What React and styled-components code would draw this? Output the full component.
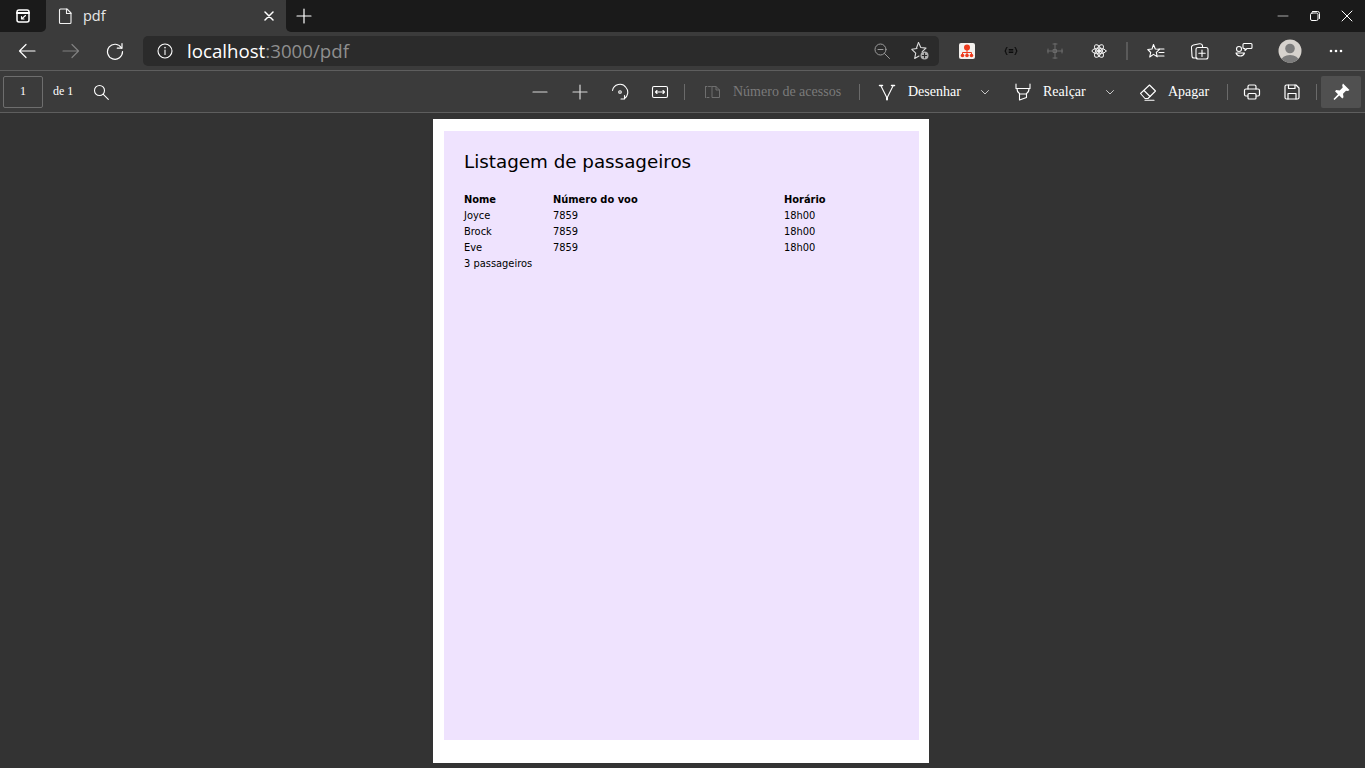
import React from "react";
import styled, { createGlobalStyle } from "styled-components";

const Global = createGlobalStyle`
  html, body { margin: 0; padding: 0; height: 768px; overflow: hidden; background: #333; }
  #root { height: 768px; }
`;
const Shell = styled.div`display:flex;flex-direction:column;width:1365px;height:768px;background:#333;overflow:hidden;`;
const TabStrip = styled.div`display:flex;height:32px;background:#3b3b3b;`;
const StripLeft = styled.div`display:flex;align-items:center;justify-content:center;width:46px;background:#1a1a1a;border-bottom-right-radius:5px;`;
const Tab = styled.div`display:flex;align-items:center;width:240px;background:#3b3b3b;border-radius:6px 6px 0 0;color:#e8e8e8;font:14.5px "Open Sans",sans-serif;padding-left:10px;box-sizing:border-box;`;
const TabTitle = styled.span`margin-left:9px;flex:1;padding-bottom:2px;`;
const TabClose = styled.span`display:flex;width:34px;justify-content:center;`;
const StripRest = styled.div`flex:1;display:flex;align-items:center;background:#1a1a1a;border-bottom-left-radius:5px;`;
const NewTab = styled.span`display:flex;width:36px;justify-content:center;`;
const WinControls = styled.div`display:flex;margin-left:auto;padding-right:2px;`;
const WinBtn = styled.span`display:flex;width:32px;justify-content:center;`;
const AddressRow = styled.div`display:flex;align-items:center;height:38px;padding-left:5px;background:#3b3b3b;border-bottom:1px solid #5e5e5e;`;
const Slot = styled.span`display:flex;flex:none;align-items:center;justify-content:center;width:${p => p.$w || 44}px;height:30px;margin-left:${p => p.$ml || 0}px;opacity:${p => p.$dim ? 0.35 : 1};`;
const Omnibox = styled.div`display:flex;align-items:center;width:796px;height:30px;margin-left:6px;margin-right:6px;background:#2b2b2b;border-radius:5px;`;
const Url = styled.div`flex:1;font:18.7px "Open Sans",sans-serif;color:#fff;padding-bottom:2px;`;
const UrlMuted = styled.span`color:#8f8f8f;`;
const VBar = styled.span`flex:none;width:2px;height:18px;background:#5a5a5a;margin-left:5px;margin-right:6px;`;
const PdfBar = styled.div`display:flex;align-items:center;height:41px;padding:0 4px 0 3px;background:#3b3b3b;border-bottom:1px solid #5e5e5e;font:14px "Liberation Serif",serif;color:#fff;`;
const PageInput = styled.div`display:flex;flex:none;align-items:center;justify-content:center;box-sizing:border-box;width:40px;height:32px;border:1px solid #6e6e6e;border-radius:2px;font-size:12px;`;
const PageOf = styled.span`flex:none;margin-left:10px;font-size:12px;width:30px;white-space:nowrap;`;
const Tool = styled.span`display:flex;flex:none;align-items:center;justify-content:center;width:${p => p.$w || 40}px;height:32px;margin-left:${p => p.$ml || 0}px;`;
const Label = styled.span`flex:none;width:${p => p.$w}px;margin-left:${p => p.$ml || 0}px;color:${p => p.$muted ? "#7a7a7a" : "#fff"};white-space:nowrap;`;
const Divider = styled.span`flex:none;width:1px;height:16px;background:#6a6a6a;margin-left:${p => p.$ml || 0}px;`;
const PinBtn = styled(Tool)`background:#505050;border-radius:2px;`;
const Viewer = styled.main`flex:1;display:flex;justify-content:center;padding-top:6px;padding-right:3px;box-sizing:border-box;`;
const Sheet = styled.div`box-sizing:border-box;width:496px;height:644px;padding:12px 10px 23px 11px;background:#fff;`;
const Content = styled.div`box-sizing:border-box;height:609px;padding:20px;background:#efe3fe;color:#000;font:9.9px "DejaVu Sans",sans-serif;`;
const Title = styled.h1`margin:0 0 19px;font-weight:400;font-size:18.3px;line-height:22px;`;
const Row = styled.div`display:grid;grid-template-columns:89px 231px 1fr;height:16px;line-height:16px;font-weight:${p => p.$head ? 700 : 400};`;

const Ic = ({ s = 18, w = 1.3, c = "#fff", children, vb = 18 }) => (
  <svg width={s} height={s} viewBox={`0 0 ${vb} ${vb}`} fill="none" stroke={c} strokeWidth={w} strokeLinecap="round" strokeLinejoin="round">{children}</svg>
);
const rows = [["Joyce", "7859", "18h00"], ["Brock", "7859", "18h00"], ["Eve", "7859", "18h00"]];

export default function App() {
  return (
    <Shell>
      <Global />
      <TabStrip>
        <StripLeft>
          <Ic s={16} vb={16} w={1.5}>
            <rect x="2" y="2" width="12" height="12" rx="2" />
            <path d="M2 5h12" strokeWidth="2" />
            <path d="M10.5 7.5 6.5 11M6.5 8.5V11H9" strokeWidth="1.1" />
          </Ic>
        </StripLeft>
        <Tab>
          <Ic s={18} w={1.1} c="#f2f2f2">
            <path d="M4.500 2h6.500l4 4v9.500a1 1 0 0 1-1 1H4.500a1 1 0 0 1-1-1V3a1 1 0 0 1 1-1z" />
            <path d="M10.500 2v4.500H15" />
          </Ic>
          <TabTitle>pdf</TabTitle>
          <TabClose>
            <Ic s={10} vb={10} w={1.5}><path d="M1 1l8 8M9 1l-8 8" /></Ic>
          </TabClose>
        </Tab>
        <StripRest>
          <NewTab>
            <Ic s={16} vb={16} w={1.2}><path d="M8 1v14M1 8h14" /></Ic>
          </NewTab>
          <WinControls>
            <WinBtn><Ic s={12} vb={12} c="#a8a8a8" w={1}><path d="M1 6h10" /></Ic></WinBtn>
            <WinBtn><Ic s={12} vb={12} w={1}><rect x="1.500" y="3" width="7.500" height="7.500" rx="1.500" /><path d="M3.500 1.500h5a2 2 0 0 1 2 2v5" /></Ic></WinBtn>
            <WinBtn><Ic s={12} vb={12} w={1}><path d="M1 1l10 10M11 1 1 11" /></Ic></WinBtn>
          </WinControls>
        </StripRest>
      </TabStrip>

      <AddressRow>
        <Slot><Ic s={18} w={1.2}><path d="M17 9H1.500M8 2.500 1.500 9 8 15.500" /></Ic></Slot>
        <Slot $dim><Ic s={18} w={1.2}><path d="M1 9h15.500M10 2.500 16.500 9 10 15.500" /></Ic></Slot>
        <Slot><Ic s={18} w={1.2}><path d="M15.500 6A7.500 7.500 0 1 0 16.500 9.500" /><path d="M16 1.500V6.200h-4.700" /></Ic></Slot>
        <Omnibox>
          <Slot><Ic s={16} vb={16} w={1.1}><circle cx="8" cy="8" r="7" /><path d="M8 7v4.500" /><path d="M8 4.500v.3" strokeWidth="1.500" /></Ic></Slot>
          <Url>localhost<UrlMuted>:3000/pdf</UrlMuted></Url>
          <Slot $w={38}><Ic s={16} vb={16} w={1} c="#9a9a9a"><circle cx="6.500" cy="6.500" r="5.500" /><path d="M4 6.500h5M10.500 10.500l5 5" /></Ic></Slot>
          <Slot $w={38}>
            <Ic s={20} vb={20} w={1.1} c="#dcdcdc">
              <path d="M8.500 1.500l2.300 5 5.200.6-3.800 3.600" /><path d="M9 15l-4.300 2.500 1-5.400L1.800 8.300 7 7.500" />
              <path d="M8.500 1.500 6.500 7" />
              <circle cx="14.500" cy="14.500" r="4" fill="#b0b0b0" stroke="none" />
              <path d="M14.500 12.300v4.400M12.300 14.500h4.400" stroke="#2b2b2b" />
            </Ic>
          </Slot>
        </Omnibox>
        <Slot>
          <svg width="16" height="16" viewBox="0 0 16 16">
            <rect width="16" height="16" rx="2" fill="#f4f1ee" />
            <circle cx="8" cy="4.500" r="3" fill="#ee3a1c" />
            <path d="M8 7v3M3.500 11V9.500h9V11M8 9.500V11" stroke="#ee3a1c" fill="none" />
            <circle cx="3.500" cy="12.500" r="1.800" fill="#ee3a1c" /><circle cx="8" cy="12.500" r="1.800" fill="#ee3a1c" /><circle cx="12.500" cy="12.500" r="1.800" fill="#ee3a1c" />
          </svg>
        </Slot>
        <Slot>
          <Ic s={14} vb={14} c="#0c0c0c" w={1.2}>
            <path d="M3 3.500C1.800 3.500 2.200 6.700 1 7c1.200.3.800 3.500 2 3.500M11 3.500c1.200 0 .8 3.200 2 3.500-1.200.3-.8 3.500-2 3.500" />
            <path d="M5.200 5.500h3.600M5.200 7h3.600M5.200 8.500h3.600" />
          </Ic>
        </Slot>
        <Slot>
          <Ic s={16} vb={16} c="#6c6c6c" w={1}>
            <path d="M8 0.500v15M0.500 8h15M6 1h4M6 15h4M1 6v4M15 6v4" />
            <rect x="6.500" y="6.500" width="3" height="3" />
          </Ic>
        </Slot>
        <Slot>
          <Ic s={16} vb={16} w={1} c="#f2f2f2">
            <circle cx="8" cy="8" r="1.500" fill="#f2f2f2" />
            <ellipse cx="8" cy="8" rx="7" ry="2.800" />
            <ellipse cx="8" cy="8" rx="7" ry="2.800" transform="rotate(60 8 8)" />
            <ellipse cx="8" cy="8" rx="7" ry="2.800" transform="rotate(120 8 8)" />
          </Ic>
        </Slot>
        <VBar />
        <Slot>
          <Ic s={18} w={1.1}>
            <path d="M6.500 1.500 8.300 6l4.200.3-3.200 3 1 4.500-3.800-2.400L2.700 14l1-4.500L.8 6.500 5 6z" transform="translate(0 1)" />
            <path d="M12 7h5M12 10.500h5M11 14h6" />
          </Ic>
        </Slot>
        <Slot>
          <Ic s={18} w={1.1}>
            <path d="M6 16H3a2 2 0 0 1-2-2l-.5-8a2.500 2.500 0 0 1 2-3l6-1.200a2.500 2.500 0 0 1 3 2V5" />
            <rect x="5" y="5.500" width="12" height="11.500" rx="2" />
            <path d="M11 8v6.500M7.800 11.200h6.400" />
          </Ic>
        </Slot>
        <Slot>
          <Ic s={18} w={1.1}>
            <circle cx="4" cy="7" r="2.500" />
            <path d="M1 11h8.500a4.500 4.500 0 0 1-8.500 0z" />
            <path d="M8 2.500a1 1 0 0 1 1-1h7a1 1 0 0 1 1 1v3a1 1 0 0 1-1 1h-4l-2 2v-2H9a1 1 0 0 1-1-1z" />
          </Ic>
        </Slot>
        <Slot $ml={2}>
          <svg width="24" height="24" viewBox="0 0 24 24">
            <defs><clipPath id="av"><circle cx="12" cy="12" r="11.500" /></clipPath></defs>
            <circle cx="12" cy="12" r="11.500" fill="#d6d2cd" />
            <g clipPath="url(#av)" fill="#7c7c7c">
              <circle cx="12" cy="9.500" r="4.800" />
              <ellipse cx="12" cy="22" rx="9" ry="6" />
            </g>
          </svg>
        </Slot>
        <Slot $ml={2}>
          <svg width="14" height="4" viewBox="0 0 14 4" fill="#fff"><circle cx="2" cy="2" r="1.300" /><circle cx="7" cy="2" r="1.300" /><circle cx="12" cy="2" r="1.300" /></svg>
        </Slot>
      </AddressRow>

      <PdfBar>
        <PageInput>1</PageInput>
        <PageOf>de 1</PageOf>
        <Tool $w={36}><Ic s={16} vb={16} w={1.1}><circle cx="6.500" cy="6.500" r="5" /><path d="M10.300 10.300l5 5" /></Ic></Tool>
        <Tool $ml={401}><Ic s={18} w={1.2} c="#d8d8d8"><path d="M2 9h14" /></Ic></Tool>
        <Tool><Ic s={18} w={1.2} c="#d8d8d8"><path d="M2 9h14M9 2v14" /></Ic></Tool>
        <Tool>
          <Ic s={18} w={1.1}>
            <path d="M1.500 7.500A7.500 7.500 0 0 1 15 4.500a7.500 7.500 0 0 1-1.500 11" />
            <circle cx="9" cy="9" r="1.300" />
            <path d="M13.500 12.500v3.500H10" />
          </Ic>
        </Tool>
        <Tool>
          <Ic s={18} w={1.1}>
            <rect x="1.500" y="3.500" width="15" height="11" rx="1.500" />
            <path d="M4.500 9h9M6 7.500 4.500 9 6 10.500M12 7.500 13.500 9 12 10.500" />
          </Ic>
        </Tool>
        <Divider $ml={4} />
        <Tool $ml={7} $w={40}>
          <Ic s={18} w={1} c="#6f6f6f">
            <path d="M7.500 3.500h-5v11h5M2.500 3.500v11" strokeDasharray="2 1.500" />
            <path d="M9 3.500v11h7.500V7L13 3.500H9zM13 3.500V7h3.500" />
          </Ic>
        </Tool>
        <Label $w={109} $ml={1} $muted>Número de acessos</Label>
        <Divider $ml={17} />
        <Tool $ml={7} $w={40}>
          <Ic s={18} w={1.1}>
            <path d="M1.500 2.500h3M13.500 2.500h3" strokeWidth="1.500" /><path d="M3 3 9 15l6-12" /><path d="M9 15v1.500" strokeWidth="2" />
          </Ic>
        </Tool>
        <Label $w={53} $ml={1}>Desenhar</Label>
        <Tool $w={48}><Ic s={10} vb={10} w={0.9} c="#d8d8d8"><path d="M1.500 3.500 5 7l3.500-3.500" /></Ic></Tool>
        <Tool $w={40} $ml={-6}>
          <Ic s={18} w={1.1}>
            <path d="M2 1v4.500h14V1" /><path d="M3 5.500c0 3 .5 4 2.500 5V17l7-2.500v-4c2-1 2.500-2 2.500-5" /><path d="M5.500 11h7" />
          </Ic>
        </Tool>
        <Label $w={43}>Realçar</Label>
        <Tool $w={48}><Ic s={10} vb={10} w={0.9} c="#d8d8d8"><path d="M1.500 3.500 5 7l3.500-3.500" /></Ic></Tool>
        <Tool $w={40} $ml={-6}>
          <Ic s={18} w={1.1}>
            <path d="M1.500 10.500 10.500 2l6 6-7.500 7.500H6z" /><path d="M5 7.500l6 6" /><path d="M6 17.200h9" />
          </Ic>
        </Tool>
        <Label $w={41}>Apagar</Label>
        <Divider $ml={18} />
        <Tool $ml={4}>
          <Ic s={18} w={1.2}>
            <path d="M5 6V3.500a1.500 1.500 0 0 1 1.500-1.500h5a1.500 1.500 0 0 1 1.500 1.500V6" />
            <path d="M4.500 13H3a1.500 1.500 0 0 1-1.500-1.500v-4A1.500 1.500 0 0 1 3 6h12a1.500 1.500 0 0 1 1.500 1.500v4A1.500 1.500 0 0 1 15 13h-1.500" />
            <rect x="5" y="10.500" width="8" height="5.500" rx="1" />
          </Ic>
        </Tool>
        <Tool>
          <Ic s={18} w={1.2}>
            <path d="M2 3.500A1.500 1.500 0 0 1 3.500 2H13l3 3v9.500a1.500 1.500 0 0 1-1.500 1.500h-11A1.500 1.500 0 0 1 2 14.500z" />
            <path d="M5.500 2v3.500h6.500V2M5 16v-5.500h8V16" />
          </Ic>
        </Tool>
        <Divider $ml={4} />
        <PinBtn $ml={4}>
          <svg width="20" height="20" viewBox="0 0 20 20" fill="#fff">
            <path d="M12 1.500 18.500 8l-1.500 1-2-.2-3 3 .5 3.500-1.200 1.200-3-3L3.500 18l-1-1 4.500-4.800-3-3L5.200 8l3.500.5 3-3-.5-2.200z" />
          </svg>
        </PinBtn>
      </PdfBar>

      <Viewer>
        <Sheet>
          <Content>
            <Title>Listagem de passageiros</Title>
            <Row $head><span>Nome</span><span>Número do voo</span><span>Horário</span></Row>
            {rows.map(r => <Row key={r[0]}><span>{r[0]}</span><span>{r[1]}</span><span>{r[2]}</span></Row>)}
            <Row><span>3 passageiros</span></Row>
          </Content>
        </Sheet>
      </Viewer>
    </Shell>
  );
}
